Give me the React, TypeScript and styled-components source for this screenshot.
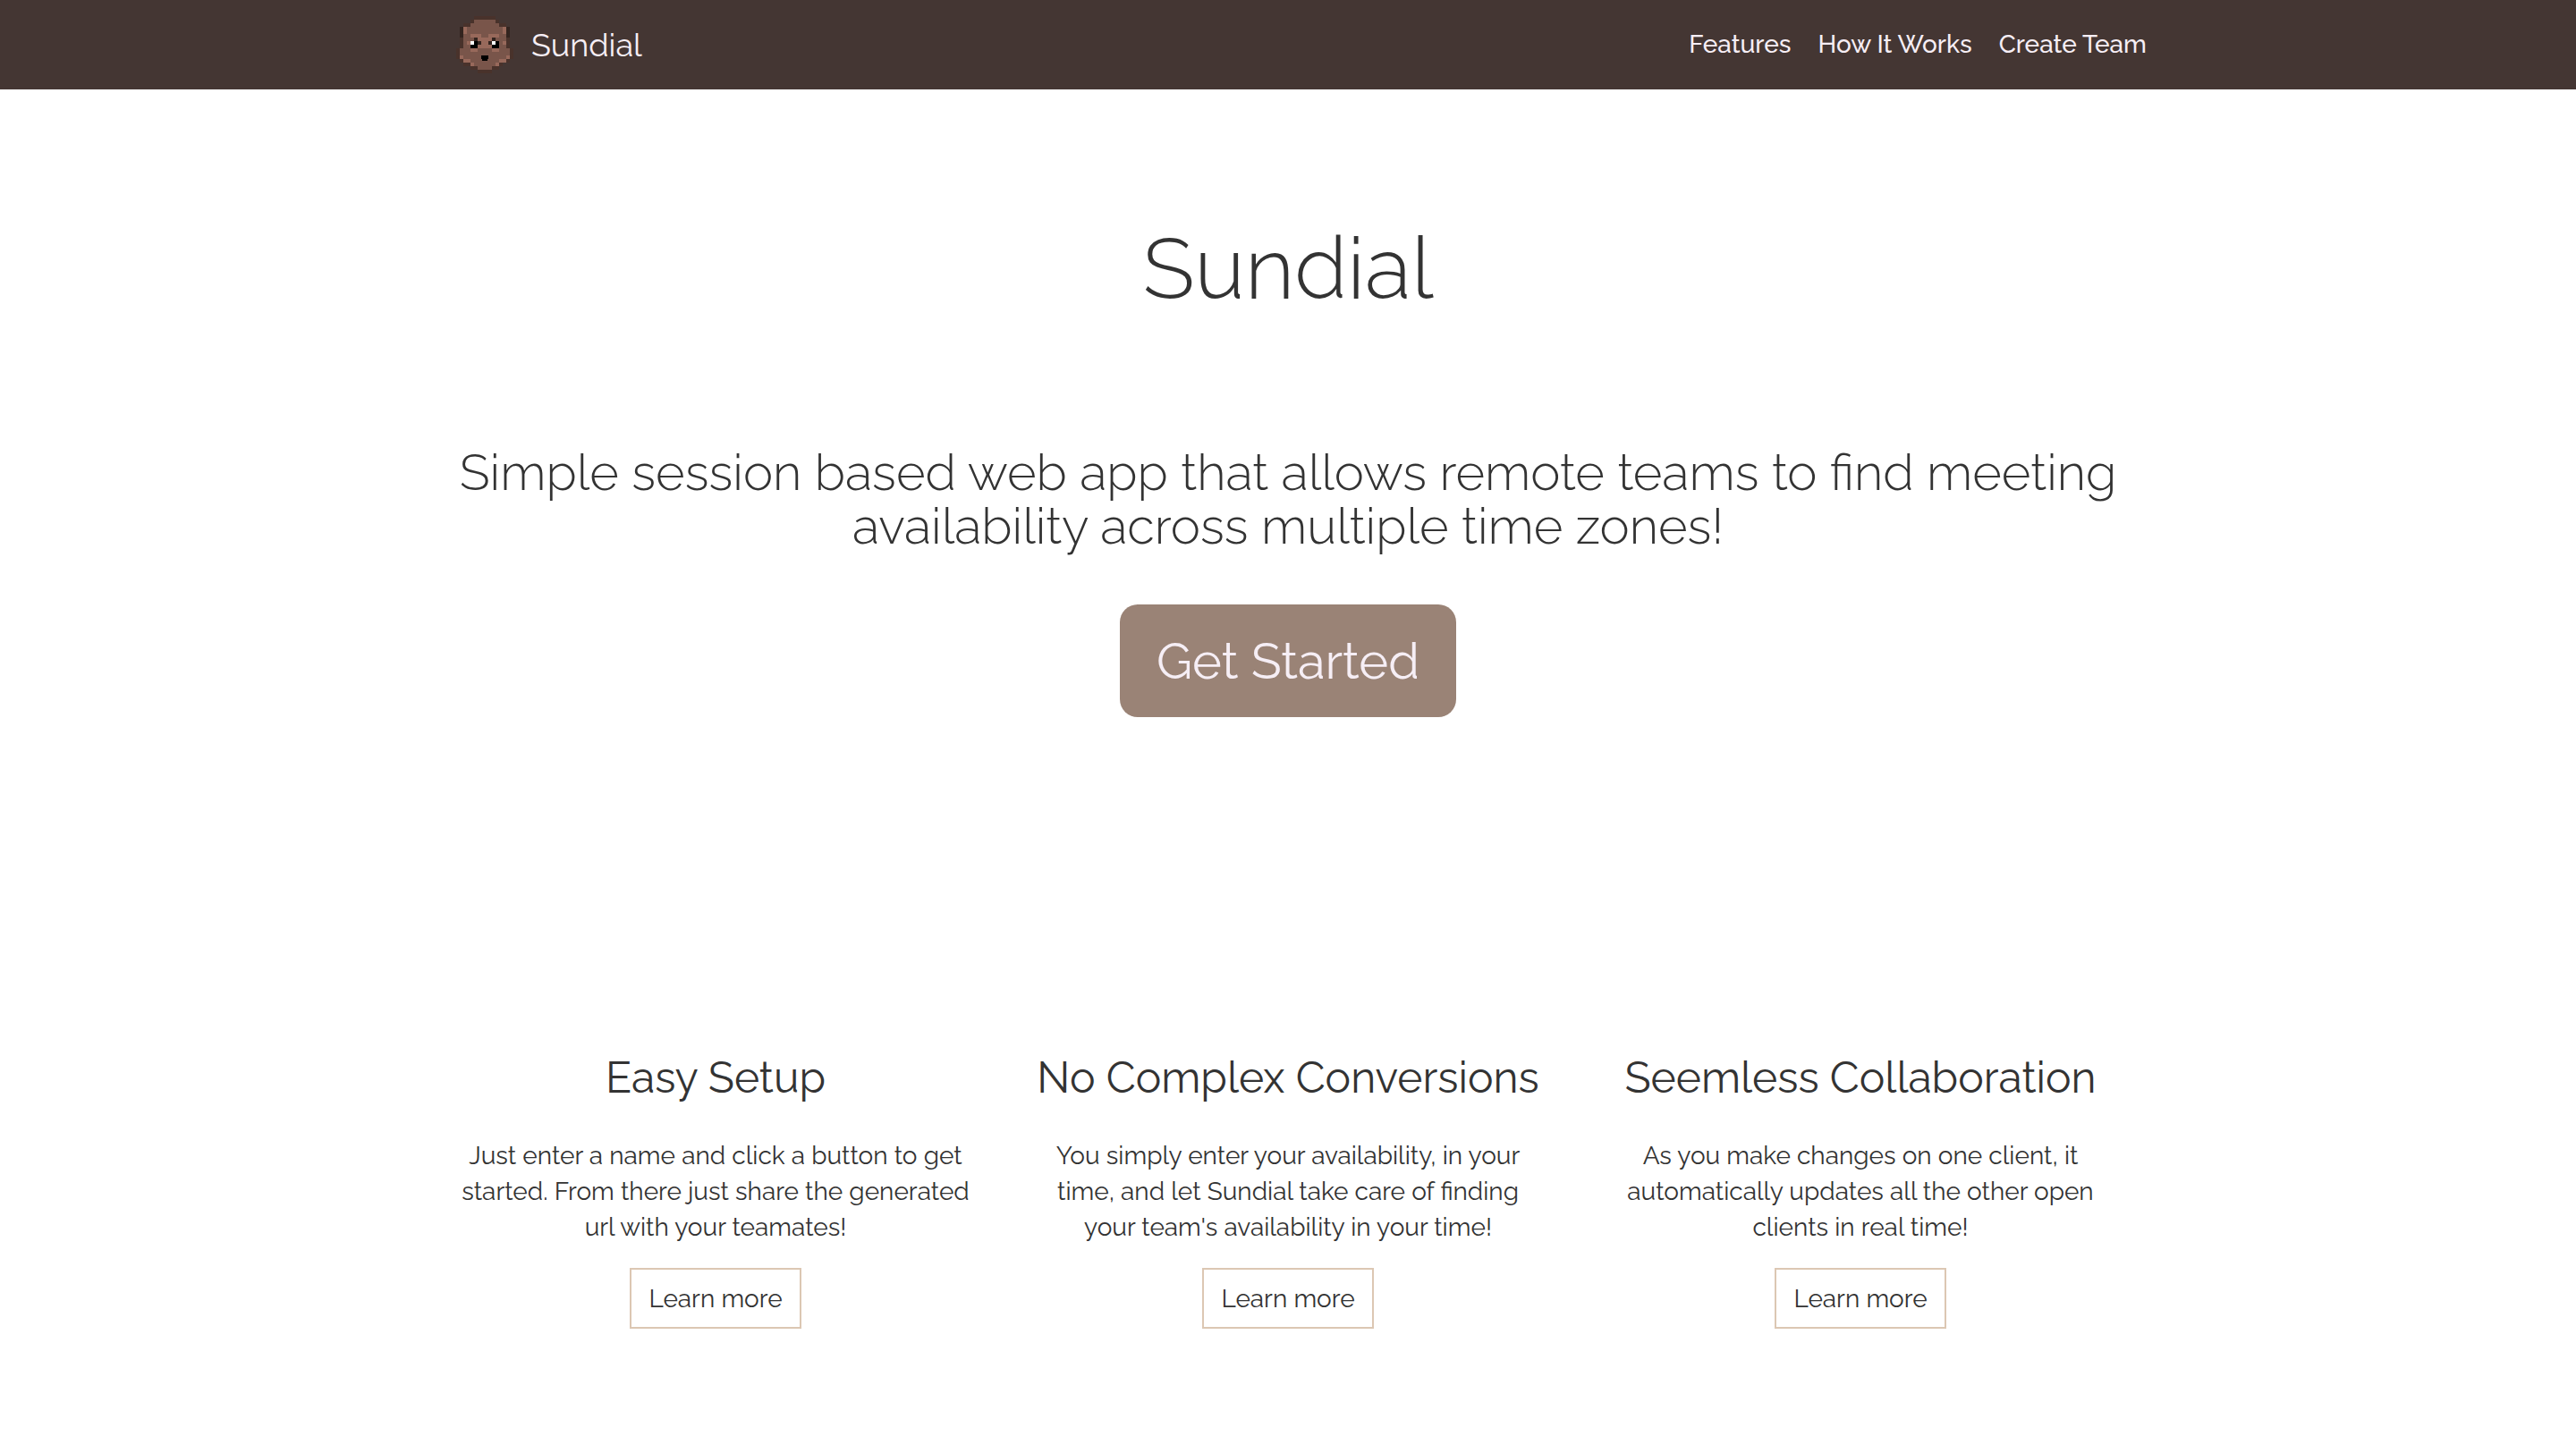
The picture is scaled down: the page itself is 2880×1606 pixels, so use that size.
import React from "react";
import styled, { createGlobalStyle } from "styled-components";

const GlobalStyle = createGlobalStyle`
  * { box-sizing: border-box; }
  body {
    margin: 0;
    background: #fff;
    color: #333;
    font-family: Raleway, Lato, "Open Sans", sans-serif;
    font-size: 28px;
    line-height: 40px;
  }
  h1, h2, h3, p { margin: 0; }
`;

const Container = styled.div`
  width: 100%;
  max-width: 1920px;
  margin: 0 auto;
  padding: 0 30px;
`;

const Navbar = styled.header`
  background: #443633;
`;

const NavInner = styled(Container)`
  display: flex;
  align-items: center;
  justify-content: space-between;
  height: 100px;
  padding-right: 0;
`;

const Brand = styled.a`
  display: flex;
  align-items: center;
  gap: 20px;
  color: #f6eef5;
  font-size: 36px;
  text-decoration: none;
`;

const NavLinks = styled.nav`
  display: flex;
  gap: 30px;
`;

const NavLink = styled.a`
  color: #f6eef5;
  font-weight: 500;
  text-decoration: none;
`;

const Hero = styled.section`
  display: flex;
  flex-direction: column;
  align-items: center;
  padding: 140px 0;
  text-align: center;
`;

const Title = styled.h1`
  font-size: 96px;
  font-weight: 300;
  line-height: 120px;
`;

const Lead = styled.h2`
  margin-top: 138px;
  font-size: 56px;
  font-weight: 300;
  line-height: 60px;
`;

const StartButton = styled.button`
  margin-top: 58px;
  height: 126px;
  padding: 0 41px;
  border: 0;
  border-radius: 20px;
  background: #9a8376;
  color: #f6eef5;
  font-family: inherit;
  font-size: 56px;
`;

const Features = styled.section`
  display: grid;
  grid-template-columns: repeat(3, 1fr);
  gap: 60px;
  padding: 233px 0 60px;
`;

const Feature = styled.article`
  display: flex;
  flex-direction: column;
  align-items: center;
  text-align: center;
`;

const FeatureTitle = styled.h3`
  font-size: 48px;
  font-weight: 400;
  line-height: 60px;
`;

const FeatureText = styled.p`
  margin: 38px 0 25px;
`;

const MoreButton = styled.button`
  height: 68px;
  padding: 0 19px;
  border: 2px solid #dcc7b3;
  background: transparent;
  color: #333;
  font-family: inherit;
  font-size: 28px;
`;

const palette: Record<string, string> = {
  o: "#49322b",
  d: "#33241f",
  b: "#79554a",
  l: "#98695b",
  k: "#000000",
  w: "#ffffff",
};

const bearRows = [
  "     oooooo     ",
  "    obbbbbbo    ",
  "  oobbbbbbbboo  ",
  " dlbbbbbbbbbbld ",
  " dlbbbbbbbbbbld ",
  " dbblllbbblllbd ",
  " obbbbdlllldbbo ",
  " oblwkdlldwkblo ",
  " obbkkllllkkbbo ",
  "obbbllbbbbllbbbo",
  "obbbbbbbbbbbbbbo",
  "olbbbbbkkbbbbblo",
  " ollbbbbbbbbllo ",
  "  oolbbbbbblo   ",
  "    oobbbboo    ",
  "      oooo      ",
];

// Brow, cheeks, eyes and glints, painted over the head: x, y, width, height, colour.
const faceDetails: [number, number, number, number, string][] = [
  [3, 5, 10, 5, "b"],
  [4, 5, 3, 1, "l"],
  [9, 5, 3, 1, "l"],
  [6, 6, 4, 3, "l"],
  [3, 7, 1, 1, "l"],
  [13, 7, 1, 1, "l"],
  [4, 9, 2, 1, "l"],
  [10, 9, 2, 1, "l"],
  [5, 6, 1, 1, "d"],
  [10, 6, 1, 1, "d"],
  [4, 7, 2, 2, "k"],
  [10, 7, 2, 2, "k"],
  [6, 7, 1, 1, "d"],
  [9, 7, 1, 1, "d"],
  [4, 7, 1, 1, "w"],
  [10, 7, 1, 1, "w"],
];

function BearLogo() {
  return (
    <svg width="64" height="64" viewBox="0 0 16 16" shapeRendering="crispEdges" aria-hidden="true">
      {bearRows.flatMap((row, y) =>
        row.split("").map((cell, x) =>
          cell === " " ? null : (
            <rect key={`${x}-${y}`} x={x} y={y} width="1" height="1" fill={palette[cell]} />
          )
        )
      )}
      {faceDetails.map(([x, y, w, h, cell], i) => (
        <rect key={i} x={x} y={y} width={w} height={h} fill={palette[cell]} />
      ))}
      <rect x="7.25" y="12" width="1.5" height="0.5" fill={palette.k} />
    </svg>
  );
}

const features = [
  {
    title: "Easy Setup",
    text: "Just enter a name and click a button to get started. From there just share the generated url with your teamates!",
  },
  {
    title: "No Complex Conversions",
    text: "You simply enter your availability, in your time, and let Sundial take care of finding your team's availability in your time!",
  },
  {
    title: "Seemless Collaboration",
    text: "As you make changes on one client, it automatically updates all the other open clients in real time!",
  },
];

export default function App() {
  return (
    <>
      <GlobalStyle />
      <Navbar>
        <NavInner>
          <Brand href="#">
            <BearLogo />
            Sundial
          </Brand>
          <NavLinks>
            <NavLink href="#features">Features</NavLink>
            <NavLink href="#how">How It Works</NavLink>
            <NavLink href="#create">Create Team</NavLink>
          </NavLinks>
        </NavInner>
      </Navbar>
      <Container as="main">
        <Hero>
          <Title>Sundial</Title>
          <Lead>
            Simple session based web app that allows remote teams to find meeting
            availability across multiple time zones!
          </Lead>
          <StartButton>Get Started</StartButton>
        </Hero>
        <Features id="features">
          {features.map((feature) => (
            <Feature key={feature.title}>
              <FeatureTitle>{feature.title}</FeatureTitle>
              <FeatureText>{feature.text}</FeatureText>
              <MoreButton>Learn more</MoreButton>
            </Feature>
          ))}
        </Features>
      </Container>
    </>
  );
}
